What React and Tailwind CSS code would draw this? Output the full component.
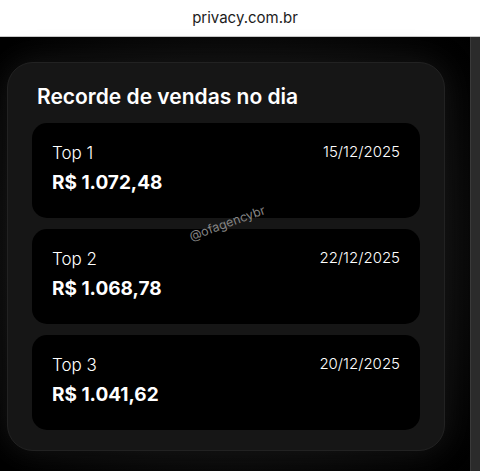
import React from "react";

const items = [
  { label: "Top 1", value: "R$ 1.072,48", date: "15/12/2025" },
  { label: "Top 2", value: "R$ 1.068,78", date: "22/12/2025" },
  { label: "Top 3", value: "R$ 1.041,62", date: "20/12/2025" },
];

export default function App() {
  return (
    <div className="w-[480px] h-[471px] bg-black flex flex-col overflow-hidden relative" style={{ fontFamily: "Inter, 'Noto Sans', sans-serif" }}>
      <div className="h-[37px] shrink-0 bg-white border-b border-[#c9c9c9] flex items-center justify-center text-[15px] text-[#1c1c1c] pl-[10px]">
        privacy.com.br
      </div>
      <div className="flex flex-1 min-h-0">
        <div className="flex-1 pl-[7px] pt-[25px] bg-[radial-gradient(ellipse_at_center,#0d0d0d_55%,#000_100%)]">
          <div className="w-[438px] h-[389px] rounded-[26px] bg-[#161616] border border-[#222] shadow-[0_0_30px_rgba(40,40,40,0.45)] px-[24px] pt-[20px] pb-[20px] flex flex-col">
            <h1 className="text-[21px] leading-[28px] font-semibold text-white pl-[5px]">Recorde de vendas no dia</h1>
            <div className="mt-[12px] flex flex-col gap-[11px]">
              {items.map((it) => (
                <div key={it.label} className="h-[95px] rounded-[15px] bg-black px-[20px] pt-[18px] flex justify-between">
                  <div className="flex flex-col">
                    <span className="text-[17px] leading-[24px] font-light text-white">{it.label}</span>
                    <span className="mt-[5px] text-[19px] leading-[26px] font-bold text-white">{it.value}</span>
                  </div>
                  <span className="text-[15px] leading-[22px] font-light text-white">{it.date}</span>
                </div>
              ))}
            </div>
          </div>
        </div>
        <div className="w-[10px] bg-[#2b2b2b] border-l border-[#3a3a3a]"></div>
      </div>
      <div className="absolute left-[190px] top-[228px] text-[12.5px] text-[#858585] -rotate-[20deg] origin-left" style={{ fontFamily: "Inter, sans-serif" }}>
        @ofagencybr
      </div>
    </div>
  );
}
